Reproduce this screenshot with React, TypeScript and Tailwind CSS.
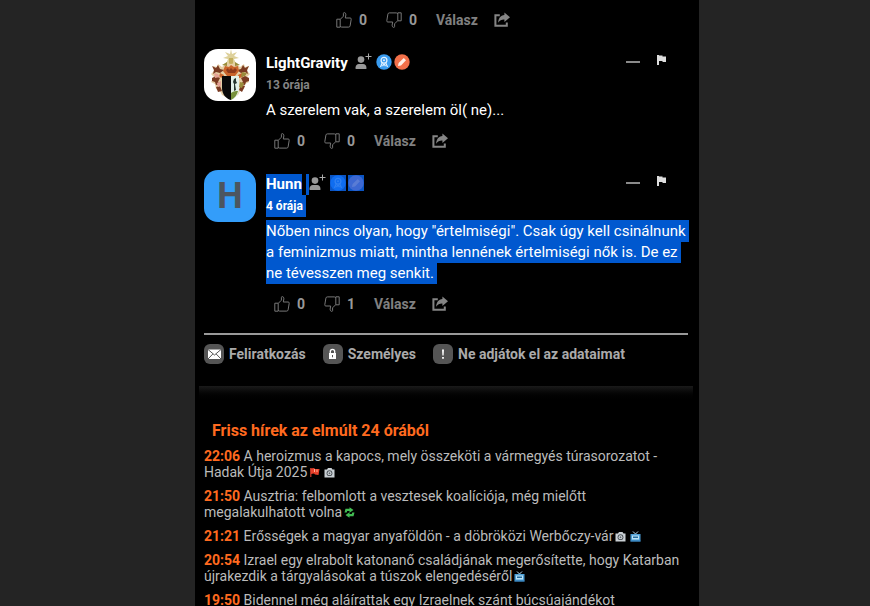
import type { ReactNode } from "react";
import clsx from "clsx";

type NewsIcon = "flag" | "camera" | "refresh" | "tv";

type NewsItem = {
  time: string;
  title: string;
  icons: NewsIcon[];
};

const news: NewsItem[] = [
  {
    time: "22:06",
    title:
      "A heroizmus a kapocs, mely összeköti a vármegyés túrasorozatot - Hadak Útja 2025",
    icons: ["flag", "camera"],
  },
  {
    time: "21:50",
    title:
      "Ausztria: felbomlott a vesztesek koalíciója, még mielőtt megalakulhatott volna",
    icons: ["refresh"],
  },
  {
    time: "21:21",
    title: "Erősségek a magyar anyaföldön - a döbröközi Werbőczy-vár",
    icons: ["camera", "tv"],
  },
  {
    time: "20:54",
    title:
      "Izrael egy elrabolt katonanő családjának megerősítette, hogy Katarban újrakezdik a tárgyalásokat a túszok elengedéséről",
    icons: ["tv"],
  },
  {
    time: "19:50",
    title: "Bidennel még aláírattak egy Izraelnek szánt búcsúajándékot",
    icons: [],
  },
];

function ThumbIcon({ down = false }: { down?: boolean }) {
  return (
    <svg
      viewBox="0 0 16 16"
      className={clsx("size-4", down && "rotate-180")}
      fill="none"
      stroke="#777"
      strokeLinejoin="round"
      aria-hidden="true"
    >
      <path d="M.8 7.2h3.4v8H.8z" />
      <path d="M4.2 7.4 7.4 4.2V1.5q0-.9.9-.9 1.6.2 1.6 2.2L9.3 6h4.9q1.2.1 1 1.3l-1.1 6.6q-.3 1.2-1.4 1.2H5.6l-1.4-.8" />
    </svg>
  );
}

function ShareIcon() {
  return (
    <svg viewBox="0 0 16 16" className="size-4" aria-hidden="true">
      <path
        d="M5.8 3.2H1.4v10.6h11.4v-3.2"
        fill="none"
        stroke="#858585"
        strokeWidth="2"
      />
      <path
        d="M10.4.4 16 5.2l-5.600 4.800V7.500C7.600 7.400 5.800 8.200 4.200 10.800 4.300 6.400 6.600 3.400 10.400 3.100z"
        fill="#858585"
      />
    </svg>
  );
}

function AddUserIcon() {
  return (
    <svg viewBox="0 0 17 17" className="h-[17px] w-[17px]" aria-hidden="true">
      <circle cx="6" cy="6.600" r="3.300" fill="#999" />
      <path d="M.6 16v-1.700c0-2 1.400-3.300 3.300-3.300h4.200c1.900 0 3.300 1.300 3.300 3.300V16z" fill="#999" />
      <path d="M13.500.500v6M10.500 3.500h6" stroke="#aaa" strokeWidth="1" />
    </svg>
  );
}

function RibbonGlyph() {
  return (
    <>
      <circle cx="8" cy="6.200" r="2.900" fill="none" stroke="#e4f2ff" strokeWidth="1.300" />
      <circle cx="8" cy="6.200" r="1" fill="#e4f2ff" />
      <path d="M6.300 8.800 4.500 13M9.700 8.800l1.800 4.200M6.500 12.200 8 10l1.500 2.200" fill="none" stroke="#e4f2ff" strokeWidth="1.200" />
    </>
  );
}

function Badges({ selected = false }: { selected?: boolean }) {
  return (
    <span className="flex gap-0.5">
      <svg
        viewBox="0 0 16 16"
        className={clsx("size-4", selected && "bg-[#0b55c4]")}
        role="img"
        aria-label="Kitüntetés"
      >
        <circle cx="8" cy="8" r="7.700" fill={selected ? "#0f6df0" : "#3a9cf0"} />
        <g opacity={selected ? 0.15 : 1}>
          <RibbonGlyph />
        </g>
      </svg>
      <svg
        viewBox="0 0 16 16"
        className={clsx("size-4", selected && "bg-[#0b55c4]")}
        role="img"
        aria-label="Szerző"
      >
        <circle cx="8" cy="8" r="7.700" fill={selected ? "#3d68d2" : "#f2704a"} />
        <path
          d="m4 12 .6-3 5.200-5L12 6.200l-5 5.200z"
          fill="#fff0e8"
          opacity={selected ? 0.15 : 1}
        />
      </svg>
    </span>
  );
}

function CrestAvatar() {
  return (
    <svg
      viewBox="0 0 52 52"
      className="size-[52px] shrink-0 rounded-[14px] bg-white"
      role="img"
      aria-label="LightGravity"
    >
      <g fill="#ddd09a">
        <path d="m27 0 1 5 5-2-3 4 5 2-5 1 2 5h-10l2-5-5-1 5-2-3-4 5 2z" />
        <path d="M25 9h4v8h-4z" fill="#c2ae5c" />
      </g>
      <path
        d="m9 17 4 1 1-3 4 3 5-4 4 1 4-1 5 4 4-3 1 3 4-1-2 5 3 3-3 3 2 5-4 2-1 5-4 2-2 4-8 4-8-4-2-4-4-2-1-5-4-2 3-5-3-3 3-3z"
        fill="#e6cfa6"
      />
      <g fill="#7a3a22">
        <path d="m8 17 4 2 2-3 2 4 4 1-4 3-4-1-3 2 1-4zM45 17l-4 2-2-3-2 4-4 1 4 3 4-1 3 2-1-4z" />
        <path d="m8 29 4-2 4 2-2 4 3 2-5 1-1-3-3-1zM45 29l-4-2-4 2 2 4-3 2 5 1 1-3 3-1z" />
        <path d="m12 38 4-1 2 5-4 1zM41 37l-4-1-2 5 3 2z" />
      </g>
      <g fill="#c9642b">
        <path d="m21 17 4 1 2-2 3 2 4-1 1 5-4 5h-8l-4-5z" />
        <path d="m16 24 4 2-1 3-4-1zM38 24l-4 2 1 3 4-1z" />
      </g>
      <path d="m22 21 2-2 1 2 2-2 2 2 2-2 2 2-2 3h-7z" fill="#8f3b1c" />
      <g fill="#e4a295">
        <path d="m10 24 4 1 2 3-5 1zM13 34l4-2v5l-3 1z" />
      </g>
      <g fill="#9a8d3c">
        <path d="m38 23 5 1-2 3-4 1zM36 33l4 1-2 5-3-1zM18 16l5-3v4zM36 16l-5-3v4z" />
      </g>
      <path d="M18 27h9v24c-5-1-9-6-9-12z" fill="#090909" />
      <path d="M27 27h8v12c0 6-3 10-8 12z" fill="#e3f2ea" />
      <path d="m30 30 2-1v3l1 2-2 1 1 6-2 1v-7l-1-2z" fill="#26362f" />
      <path d="M27 44c3-2 5-2 7-2-1 4-3 7-7 9z" fill="#77913c" />
    </svg>
  );
}

function Actions({ up, down }: { up: number; down: number }) {
  return (
    <div className="flex h-4 items-center text-sm font-bold text-[#999]">
      <button type="button" className="flex items-center gap-[7px]" aria-label={`Tetszik ${up}`}>
        <ThumbIcon />
        <span className="w-5 text-left">{up}</span>
      </button>
      <button type="button" className="ml-[7px] flex items-center gap-[7px]" aria-label={`Nem tetszik ${down}`}>
        <ThumbIcon down />
        <span className="w-5 text-left">{down}</span>
      </button>
      <button type="button" className="ml-[7px] text-[#808080]">
        Válasz
      </button>
      <button type="button" className="ml-4" aria-label="Megosztás">
        <ShareIcon />
      </button>
    </div>
  );
}

type CommentProps = {
  avatar: ReactNode;
  name: string;
  time: string;
  up: number;
  down: number;
  selected?: boolean;
  children: ReactNode;
};

function Comment({ avatar, name, time, up, down, selected, children }: CommentProps) {
  return (
    <article className="flex gap-2.5 pb-[21px]">
      {avatar}
      <div className="min-w-0 flex-1 pt-[3px]">
        <header className="flex h-[22px] items-center">
          <a
            href="#profile"
            className={clsx(
              "text-[15px] leading-[21px] font-bold text-white",
              selected && "bg-[#0058cf]"
            )}
          >
            {name}
          </a>
          <button
            type="button"
            className={clsx(
              "ml-1 flex h-[21px] items-center pb-1",
              selected ? "border-l-3 border-[#0058cf]" : "pl-[3px]"
            )}
            aria-label="Követés"
          >
            <AddUserIcon />
          </button>
          <span className="ml-1 pb-0.5">
            <Badges selected={selected} />
          </span>
          <span className="mr-[21px] ml-auto flex items-center gap-4 pb-0.5">
            <button type="button" className="flex h-4 w-[14px] items-center" aria-label="Összecsukás">
              <span className="h-0.5 w-full bg-[#8a8a8a]" />
            </button>
            <button type="button" className="pb-1" aria-label="Jelentés">
              <svg viewBox="0 0 11 12" className="h-3 w-[11px]" aria-hidden="true">
                <path d="M1 1h2v10H1zM3 1.500h3.500v1H10v5.500H6.500V7H3z" fill="#ddd" />
              </svg>
            </button>
          </span>
        </header>
        <div className="flex">
          <time
            className={clsx(
              "pr-[3px] text-xs leading-[22px] font-bold",
              selected ? "bg-[#0058cf] text-white" : "text-[#858585]"
            )}
          >
            {time}
          </time>
        </div>
        <p className="mt-1 text-[15px] leading-[21px] text-white">
          {selected ? (
            <span className="bg-[#0058cf] box-decoration-clone py-0.5 pr-[3px]">
              {children}
            </span>
          ) : (
            children
          )}
        </p>
        <div className="mt-3 pl-2">
          <Actions up={up} down={down} />
        </div>
      </div>
    </article>
  );
}

function OptionLink({ icon, label }: { icon: ReactNode; label: string }) {
  return (
    <a href="#options" className="flex items-center gap-[5px]">
      <svg viewBox="0 0 20 20" className="size-5 rounded-md bg-[#555]" aria-hidden="true">
        {icon}
      </svg>
      {label}
    </a>
  );
}

function NewsGlyph({ kind }: { kind: NewsIcon }) {
  return (
    <svg
      viewBox="0 0 11 11"
      className="mx-0.5 inline-block h-[11px] w-[11px] align-[-1px]"
      aria-hidden="true"
    >
      {kind === "flag" && (
        <>
          <path d="M1 1h1.500v9H1z" fill="#a33226" />
          <path d="M1.500 1.500 5 1l1 1h4.500L9.500 8 6 7.500 5 6.500l-3 .5z" fill="#e8402a" />
          <path d="M5 2h1v3H5zM7.500 2.500h1V5h-1z" fill="#ffb09a" />
        </>
      )}
      {kind === "camera" && (
        <>
          <path d="M.5 2.500H3L4 1h3.500l1 1.500h2v8H.5z" fill="#c9cfd4" />
          <circle cx="5.500" cy="6.200" r="2.900" fill="#4f565c" />
          <circle cx="5.500" cy="6.200" r="1.900" fill="#dfe4e8" />
          <circle cx="5.500" cy="6.200" r="1" fill="#5c646b" />
        </>
      )}
      {kind === "refresh" && (
        <g fill="#42bb52">
          <path d="M.5 5.500 1.500 1.800h4V.300L9.500 3 5.500 5.700V4H3.200l-.4 1.500z" />
          <path d="M10.500 5.500 9.500 9.200h-4v1.500L1.500 8l4-2.700V7h2.300l.4-1.500z" />
        </g>
      )}
      {kind === "tv" && (
        <>
          <path d="m3 .5 2.500 2.500L8 .5" fill="none" stroke="#b9dcf2" />
          <path d="M.5 3h10v7.500H.5z" fill="#4d9fd6" />
          <path d="M2 4.500h7v4H2z" fill="#bce3f7" />
          <path d="M3 5.500h5v1.500H3z" fill="#246c9e" />
          <path d="M.5 9.500h10v1H.5z" fill="#2f76b0" />
        </>
      )}
    </svg>
  );
}

export default function App() {
  return (
    <div className="h-screen overflow-hidden bg-[#242424] pl-6 font-['Roboto',sans-serif]">
      <main className="mx-auto min-h-full w-full max-w-[504px] bg-black pt-3 pr-1.5 pl-1">
        <section className="pr-[5px] pl-[5px]">
          <div className="pb-[21px] pl-[132px]">
            <Actions up={0} down={0} />
          </div>
          <Comment avatar={<CrestAvatar />} name="LightGravity" time="13 órája" up={0} down={0}>
            A szerelem vak, a szerelem öl( ne)...
          </Comment>
          <Comment
            avatar={
              <div className="flex size-[52px] shrink-0 items-center justify-center rounded-[14px] bg-[#339dfa] text-4xl font-bold text-[#4c5560]">
                H
              </div>
            }
            name="Hunn"
            time="4 órája"
            up={0}
            down={1}
            selected
          >
            Nőben nincs olyan, hogy "értelmiségi". Csak úgy kell csinálnunk a
            feminizmus miatt, mintha lennének értelmiségi nők is. De ez ne
            tévesszen meg senkit.
          </Comment>
          <nav className="flex flex-wrap gap-[17px] border-t-2 border-[#999] pt-[9px] text-sm leading-5 font-bold text-[#aaa]">
            <OptionLink
              label="Feliratkozás"
              icon={
                <>
                  <path d="M4 5.500h13v9.500H4z" fill="#fff" />
                  <path d="m4 5.500 6.500 5.500L17 5.500M4 15l4.800-5M17 15l-4.800-5" fill="none" stroke="#555" />
                </>
              }
            />
            <OptionLink
              label="Személyes"
              icon={
                <>
                  <path d="M6 9h7v6H6z" fill="#fff" />
                  <path d="M7.300 9V7.500a2.200 2.200 0 0 1 4.400 0V9" fill="none" stroke="#fff" strokeWidth="1.300" />
                  <path d="M9 11h1v2.200H9z" fill="#555" />
                </>
              }
            />
            <OptionLink
              label="Ne adjátok el az adataimat"
              icon={<path d="M9 5.500h2l-.4 6H9.400zM9.100 13h1.800v1.800H9.100z" fill="#fff" />}
            />
          </nav>
        </section>
        <div className="mt-[22px] h-4 bg-linear-to-b from-[#1a1a1a] to-black" />
        <section className="pt-[19px] pr-1 pl-[5px]">
          <h2 className="px-2 text-base leading-5 font-bold text-[#ff6a1f]">
            Friss hírek az elmúlt 24 órából
          </h2>
          <ul className="mt-[7px] space-y-2 text-sm leading-4 text-[#bbb]">
            {news.map((item) => (
              <li key={item.time}>
                <a href="#news">
                  <b className="text-[#ff6a1f]">{item.time}</b> {item.title}
                  {item.icons.map((kind) => (
                    <NewsGlyph key={kind} kind={kind} />
                  ))}
                </a>
              </li>
            ))}
          </ul>
        </section>
      </main>
    </div>
  );
}
